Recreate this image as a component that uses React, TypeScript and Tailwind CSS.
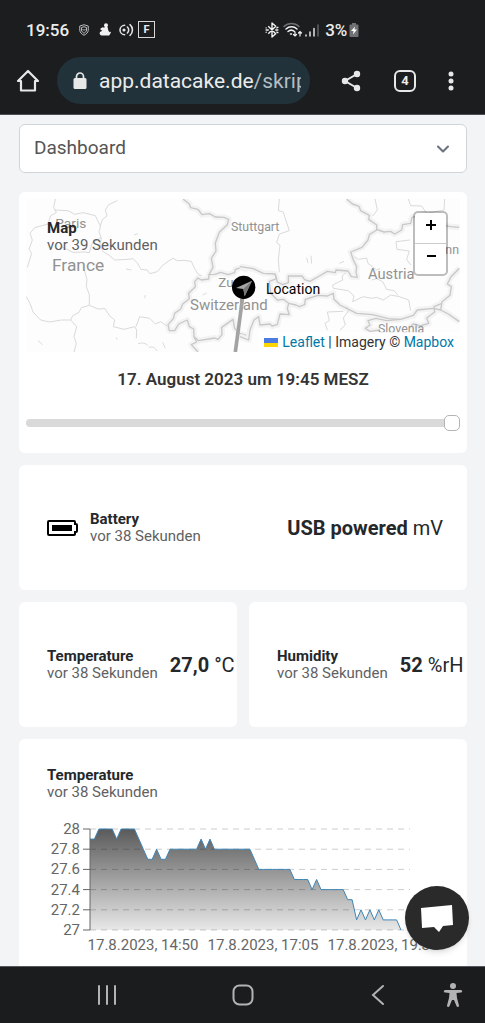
import { useState } from "react";
import type { ReactNode } from "react";
import clsx from "clsx";
import { ChevronDown } from "lucide-react";

const StatusBar = () => (
  <div className="flex h-[57px] items-center pl-[26px] pt-0.5 text-[17px] font-medium leading-6">
    <span>19:56</span>
    <svg className="ml-2.5 h-3 w-2.5" viewBox="0 0 20 24" fill="none" stroke="#b9bbbd" strokeWidth="2">
      <path d="M10 1.500 18.500 4v8c0 5-4 8.500-8.500 10.500C5.500 20.500 1.500 17 1.500 12V4z" />
      <path d="M10 5.500 15 7v5c0 3-2.500 5-5 6.500C7.500 17 5 15 5 12V7z" />
      <path d="m7 10 3 3 3-3" />
    </svg>
    <svg className="ml-2.5 h-3.5 w-3" viewBox="0 0 24 28" fill="#f1f1f1">
      <circle cx="14" cy="4.500" r="4" />
      <path d="M11 8h6l2 8c3 2 3 6 1 9H6c-4 0-6-4-4-7 2-2 6-2 7-4z" />
      <path d="m2 12 6-4 4 4-4 5z" />
      <path d="m18 22 4-5 2 2-4 6z" />
    </svg>
    <svg className="ml-[7px] h-4 w-4" viewBox="0 0 24 24" fill="none" stroke="#e4e4e4" strokeWidth="2.300" strokeLinecap="round">
      <path d="M10 5a7 7 0 1 0 0 14" />
      <path d="M14 7.500a6 6 0 0 1 0 9" />
      <path d="M18 4a10.500 10.500 0 0 1 0 16" />
      <circle cx="9" cy="12" r="1.200" fill="#e4e4e4" />
    </svg>
    <span className="ml-1 flex size-[17px] items-center justify-center border border-[#d8d8d8] text-[11px] font-bold leading-none">
      F
    </span>
    <svg className="ml-[110px] h-4 w-3.5" viewBox="0 0 26 30" fill="none" stroke="#f1f1f1" strokeWidth="2.600" strokeLinejoin="round">
      <path d="m6 8 14 14-7 6V2l7 6L6 22" />
      <path d="M2 11v.1M2 19v.1M6 15H2M24 15h-4M24 10l-2 1M24 20l-2-1" strokeLinecap="round" />
    </svg>
    <svg className="ml-1 h-4 w-5" viewBox="0 0 40 32" fill="none" stroke="#f1f1f1" strokeWidth="3" strokeLinecap="round">
      <path d="M2 9a22 22 0 0 1 30 0" stroke="#6d6f72" />
      <path d="M6 14a16 16 0 0 1 22 0" />
      <path d="M10 19a10 10 0 0 1 13 0" />
      <path d="M15 24h2" />
      <path d="M24 20v8m-3-3 3 3 3-3M34 28v-9m-3 3 3-3 3 3" strokeWidth="2.400" />
    </svg>
    <svg className="ml-0.5 h-4 w-3.5" viewBox="0 0 28 32" strokeWidth="3" strokeLinecap="round">
      <path d="M2 28v-2M10 28v-8M18 28V13" stroke="#e4e4e4" />
      <path d="M26 28V6" stroke="#606265" />
    </svg>
    <span className="ml-1.5">3%</span>
    <svg className="ml-0.5 h-4 w-2.5" viewBox="0 0 20 30">
      <path d="M6 1h8v3h3q2 0 2 2v21q0 2-2 2H3q-2 0-2-2V6q0-2 2-2h3z" fill="#6f7174" />
      <path d="m12 8-8 9h5l-1 7 8-10h-5z" fill="#fff" />
    </svg>
  </div>
);

const AddressBar = () => (
  <div className="flex h-[47px] items-center pl-4">
    <button type="button" aria-label="Home" className="size-6">
      <svg viewBox="0 0 24 24" fill="none" stroke="#e8e8e8" strokeWidth="2.200" strokeLinejoin="round">
        <path d="M2 12 12 2l10 10h-3v9.500H5V12z" />
      </svg>
    </button>
    <div className="ml-[17px] flex h-full min-w-0 flex-1 items-center rounded-full bg-[#22323a] pl-4 pr-[9px]">
      <svg className="h-[18px] w-3.5 shrink-0" viewBox="0 0 14 18">
        <path d="M3.500 7V4.500a3.500 3.500 0 0 1 7 0V7" fill="none" stroke="#e8e8e8" strokeWidth="1.700" />
        <rect x="0.500" y="6" width="13" height="11" rx="1.500" fill="#e8e8e8" />
      </svg>
      <div className="ml-3 overflow-hidden whitespace-nowrap text-[21px] leading-8">
        app.datacake.de<span className="text-[#b4bdc2]">/skrip</span>
      </div>
    </div>
    <button type="button" aria-label="Share" className="ml-[30px] size-[22px]">
      <svg viewBox="0 0 22 22" fill="#e8e8e8" stroke="#e8e8e8" strokeWidth="2">
        <path d="M17 4 5 11l12 7" fill="none" />
        <circle cx="17" cy="4" r="2.200" />
        <circle cx="5" cy="11" r="2.200" />
        <circle cx="17" cy="18" r="2.200" />
      </svg>
    </button>
    <button
      type="button"
      aria-label="Tabs"
      className="ml-8 flex size-[22px] items-center justify-center rounded-md border-2 border-[#e8e8e8] text-[13px] font-bold leading-none"
    >
      4
    </button>
    <button type="button" aria-label="Menu" className="ml-6 mr-[23px] size-[22px]">
      <svg viewBox="0 0 22 22" fill="#e8e8e8">
        <circle cx="11" cy="4" r="2.500" />
        <circle cx="11" cy="11" r="2.500" />
        <circle cx="11" cy="18" r="2.500" />
      </svg>
    </button>
  </div>
);

const Card = ({ className, children }: { className?: string; children: ReactNode }) => (
  <section className={clsx("rounded-md bg-white", className)}>{children}</section>
);

const WidgetTitle = ({ title, updated }: { title: string; updated: string }) => (
  <div className="whitespace-nowrap text-[15px] leading-[17px]">
    <h2 className="font-bold text-[#24282b]">{title}</h2>
    <p className="text-[#5f6163]">{updated}</p>
  </div>
);

const WidgetValue = ({ value, unit }: { value: string; unit: string }) => (
  <p className="whitespace-nowrap text-[20px] leading-6 text-[#24282b]">
    <strong className="font-bold">{value}</strong> {unit}
  </p>
);

// Country borders are heavier than the regional ones
const westRegions = [
  "M112 27 107 52 115 68 98 77 90 102 50 113 36 130 43 150 33 178 41 190 28 232",
  "M110 60 150 62 170 73 195 68 232 77 240 94 248 108 243 125 250 145 246 162 254 184 275 197 290 210 330 208 345 206 358 219 369 238 388 240 395 251 418 245 434 226 452 213 465 205 478 212 498 211 520 214 530 236 540 252 552 258",
  "M298 32 272 44 262 60 267 78 254 88 246 110",
  "M250 142 222 160 214 188 199 186 165 187 130 170",
  "M199 240 207 268 205 290 214 314 214 346 190 353 183 367 164 377 158 390 130 390 95 396 68 390 45 366 36 340 25 320",
  "M158 390 176 410 168 440 175 460 168 486",
  "M214 346 240 357 261 356 275 378 290 390 286 410 318 418 350 410 356 420 355 445M354 410 365 380 395 385 412 402 428 395 446 408",
];

const westBorders = [
  "M495 27 514 42 518 53 540 58 552 74 574 71 592 81 618 82 632 88 628 104 604 127 592 159 594 183 580 205 585 232 573 254 590 253 608 247 630 254 650 248 652 238 672 232 690 240",
  "M573 254 572 267 550 270 540 264 530 275 532 290 512 310 514 326 494 342 488 357 470 370 466 386 450 404 454 422 470 422 482 402 508 390 514 410 527 417 528 440 542 452 590 444 600 448 612 434 611 412 628 400 645 388 650 415 664 430 690 438",
  "M528 440 536 456 520 464 540 486",
];

const eastRegions = [
  "M118 27 115 62 130 66 134 80 148 122 118 132 110 158 120 165 115 210 118 247",
  "M405 27 412 60 398 78M505 27 512 47 545 48 560 70 612 60 614 27",
  "M343 200 355 208 380 204 384 220 410 240 420 236",
  "M510 150 468 155 471 178 508 183 500 208 512 225",
  "M318 248 306 258 308 270 278 285 280 295 325 302 342 318 338 335 370 320 395 325 410 322 430 330 452 315 478 320 506 330 512 362",
  "M320 350 326 362 310 384 316 405 300 420M310 364 262 366 268 392 255 400 262 420",
  "M395 270 410 266 428 275 440 298 462 302 474 316",
];

const eastBorders = [
  "M320 27 337 42 357 49 362 62 388 76 386 88 410 105 410 120 388 134 384 150 366 172 332 186 340 210 350 230 348 247 352 262 334 260 324 243 288 240 286 248 262 244 238 258 210 274 194 269 186 258 145 258 145 278 128 284 112 276 105 252 70 250 40 236 0 230",
  "M410 118 432 126 452 124 464 132 485 120 488 104 512 100 516 82 560 70M612 106 632 110 658 112",
  "M105 252 110 266 88 274 92 310 112 330 130 328 146 340 168 345 178 350 194 344 196 328 234 316 262 318 280 310 282 328 300 345 350 370 398 374 445 386 482 388 520 376 532 360 580 355 602 360 606 335 630 316 634 290 622 282 632 262 658 235",
  "M146 340 142 356 148 374 120 372 112 404 96 408 90 402 60 405 56 380 42 390 30 420 26 450 0 440",
  "M482 388 440 392 408 385 384 392 390 405 376 415 390 424 420 420M602 360 625 372 658 395M606 340 582 350 584 366 560 384 566 400 540 408 520 402 510 412",
];

const MapBackground = () => (
  <svg className="absolute inset-0 h-full w-full" viewBox="0 0 1302 459" preserveAspectRatio="xMidYMid slice">
    <rect width="1302" height="459" fill="#fdfdfd" />
    {[
      { shift: "translate(-24 -27)", regions: westRegions, borders: westBorders },
      { shift: "translate(642 -27)", regions: eastRegions, borders: eastBorders },
    ].map((half) => (
      <g key={half.shift} transform={half.shift} fill="none" strokeLinejoin="round">
        {half.borders.map((d) => (
          <path key={d} d={d} stroke="#f3f3f3" strokeWidth="18" />
        ))}
        {half.regions.map((d) => (
          <path key={d} d={d} stroke="#dadada" strokeWidth="3" />
        ))}
        {half.borders.map((d) => (
          <path key={d} d={d} stroke="#c8c8c8" strokeWidth="4" />
        ))}
      </g>
    ))}
    <path
      d="m324 108 12-4M300 210l16 3M356 298l2-10M36 425l14 12M270 416l4 6M336 434q20-6 30 6M368 446q14-8 26 10M410 430l8 18M842 176l4 16M855 170l2 24M940 193l14-6M530 288l12-6"
      fill="none"
      stroke="#dcdcdc"
      strokeWidth="3"
    />
    <g fill="#929292" fontSize="37">
      <text x="88" y="87" fontSize="41">Paris</text>
      <text x="78" y="215" fontSize="52">France</text>
      <text x="615" y="95">Stuttgart</text>
      <text x="577" y="265" fontSize="40">Zu</text>
      <text x="492" y="334" fontSize="45">Switzerland</text>
      <text x="1026" y="239" fontSize="44">Austria</text>
      <text x="1056" y="402">Slovenia</text>
      <text x="1258" y="165">nn</text>
    </g>
    <path d="M652 280 628 459" stroke="#a3a3a3" strokeWidth="11" />
    <circle cx="653" cy="265" r="35" fill="#000" />
    <path d="m678 245-48 22 22 3 4 22z" fill="#a5a5a5" />
    <path d="m678 245-26 25 4 22z" fill="#777" />
  </svg>
);

const MapWidget = () => {
  const [position, setPosition] = useState(100);

  return (
    <Card className="p-[7px] pb-[22px]">
      <div className="relative h-[153px] overflow-hidden">
        <MapBackground />
        <div className="absolute left-[21px] top-[21px]">
          <WidgetTitle title="Map" updated="vor 39 Sekunden" />
        </div>
        <span className="absolute left-1/2 top-20 ml-[23px] text-[14px] leading-5 text-black">Location</span>
        <div className="absolute right-3 top-3 flex w-[35px] flex-col rounded-[5px] border-2 border-black/25 bg-white bg-clip-padding">
          <button type="button" aria-label="Zoom in" className="flex h-[31px] items-center justify-center border-b border-[#ccc] pb-1.5">
            <svg className="size-3" viewBox="0 0 12 12" stroke="#000" strokeWidth="2">
              <path d="M6 1v10M1 6h10" />
            </svg>
          </button>
          <button type="button" aria-label="Zoom out" className="flex h-[30px] items-center justify-center pb-1.5">
            <svg className="size-3" viewBox="0 0 12 12" stroke="#000" strokeWidth="2">
              <path d="M2 6h9" />
            </svg>
          </button>
        </div>
        <div className="absolute bottom-0 right-0 flex items-center whitespace-pre bg-white/80 px-1.5 text-[14px] leading-5 text-[#333]">
          <svg className="mr-1 h-[9px] w-3.5" viewBox="0 0 14 9">
            <path d="M0 0h14v5H0z" fill="#4c7be1" />
            <path d="M0 5h14v4H0z" fill="#ffd500" />
          </svg>
          <a href="#leaflet" className="text-[#0078a8]">Leaflet</a>
          <span> | Imagery © </span>
          <a href="#mapbox" className="text-[#0078a8]">Mapbox</a>
        </div>
      </div>
      <p className="mt-[15px] text-center text-[17px] font-semibold leading-6 text-[#343434]">17. August 2023 um 19:45 MESZ</p>
      <input
        type="range"
        aria-label="Zeitpunkt"
        value={position}
        onChange={(e) => setPosition(Number(e.target.value))}
        className="mt-6 block h-4 w-full appearance-none bg-transparent [&::-webkit-slider-runnable-track]:h-2 [&::-webkit-slider-runnable-track]:rounded-full [&::-webkit-slider-runnable-track]:bg-[#d9d9d9] [&::-webkit-slider-thumb]:-mt-1 [&::-webkit-slider-thumb]:size-4 [&::-webkit-slider-thumb]:appearance-none [&::-webkit-slider-thumb]:rounded-[5px] [&::-webkit-slider-thumb]:border [&::-webkit-slider-thumb]:border-[#b5b5b5] [&::-webkit-slider-thumb]:bg-white"
      />
    </Card>
  );
};

const BatteryIcon = () => (
  <svg className="h-4 w-[31px] shrink-0" viewBox="0 0 31 16">
    <path
      d="M2 1h25q1 0 1 1v2h1q1 0 1 1v6q0 1-1 1h-1v2q0 1-1 1H2q-1 0-1-1V2q0-1 1-1z"
      fill="none"
      stroke="#000"
      strokeWidth="2"
    />
    <rect x="5" y="5" width="20" height="6" fill="#000" />
  </svg>
);

// [value, number of consecutive samples]
const runs: [number, number][] = [
  [27.9, 2], [28, 4], [27.9, 1], [28, 4], [27.9, 1], [27.8, 1], [27.7, 2], [27.8, 1], [27.7, 2],
  [27.8, 7], [27.9, 1], [27.8, 1], [27.9, 1], [27.8, 9], [27.7, 1], [27.6, 8], [27.5, 4],
  [27.4, 1], [27.5, 1], [27.4, 6], [27.3, 2], [27.1, 1], [27.2, 1], [27.1, 1], [27.2, 1],
  [27.1, 1], [27.2, 1], [27.1, 4], [27, 1],
];
const samples = runs.flatMap(([value, count]) => Array<number>(count).fill(value));

const yTicks = [28, 27.8, 27.6, 27.4, 27.2, 27];
const xTicks = ["17.8.2023, 14:50", "17.8.2023, 17:05", "17.8.2023, 19:35"];

const chartLeft = 64;
const chartRight = 375;
const yFor = (value: number) => 13 + (28 - value) * 101;

const TemperatureChart = () => {
  const step = (chartRight - chartLeft) / (samples.length - 1);
  const line = samples.map((v, i) => `${(chartLeft + i * step).toFixed(1)},${yFor(v).toFixed(1)}`).join(" ");

  return (
    <svg className="mt-[15px] block w-full" viewBox="0 0 434 142" fontSize="15" fill="#666">
      <defs>
        <linearGradient id="temperature-fill" x1="0" y1="0" x2="0" y2="1">
          <stop offset="0" stopColor="#5a5a5a" />
          <stop offset="1" stopColor="#e8e8e8" />
        </linearGradient>
      </defs>
      <polygon points={`${chartLeft},${yFor(27)} ${line}`} fill="url(#temperature-fill)" />
      {yTicks.map((tick) => (
        <g key={tick}>
          <path d={`M${chartLeft} ${yFor(tick)}H384`} stroke="#000" strokeOpacity="0.2" strokeDasharray="6 5" />
          <path d={`M57 ${yFor(tick)}h7`} stroke="#666" />
          <text x="54" y={yFor(tick) + 5} textAnchor="end">{tick}</text>
        </g>
      ))}
      <polyline points={line} fill="none" stroke="#3f85b5" strokeWidth="1" />
      <path d={`M${chartLeft} ${yFor(28)}V${yFor(27)}`} stroke="#666" />
      {xTicks.map((label, i) => (
        <text key={label} x={117 + i * 120} y="134" textAnchor="middle">{label}</text>
      ))}
    </svg>
  );
};

const NavigationBar = () => (
  <nav className="flex h-[57px] shrink-0 items-center border-t border-[#55585c] bg-[#1b1c1e] pl-24 pr-[21px]">
    <div className="mr-[53px] flex flex-1 justify-between">
      <button type="button" aria-label="Recents" className="size-[22px]">
        <svg viewBox="0 0 22 22" stroke="#b3b3b3" strokeWidth="2" strokeLinecap="round">
          <path d="M3 2v18M11 2v18M19 2v18" />
        </svg>
      </button>
      <button type="button" aria-label="Home screen" className="size-[22px]">
        <svg viewBox="0 0 22 22" fill="none" stroke="#b3b3b3" strokeWidth="2">
          <rect x="1.500" y="1.500" width="19" height="19" rx="6" />
        </svg>
      </button>
      <button type="button" aria-label="Back" className="size-[22px]">
        <svg viewBox="0 0 22 22" fill="none" stroke="#b3b3b3" strokeWidth="2" strokeLinecap="round">
          <path d="m16 2-10 9 10 9" />
        </svg>
      </button>
    </div>
    <button type="button" aria-label="Accessibility" className="h-6 w-[22px]">
      <svg viewBox="0 0 22 24" fill="#b3b3b3">
        <circle cx="11" cy="3" r="3" />
        <path d="M3 7h16q1.500.500 1.200 1.600-.200.800-1.200.900l-4.500.500.500 5 2 7.500q0 1.500-1.200 1.500-1 0-1.300-1L12 17h-2l-2.500 6q-.300 1-1.300 1Q5 24 5 22.500L7 15l.500-5L3 9.500q-1-.100-1.200-.900Q1.500 7.500 3 7z" />
      </svg>
    </button>
  </nav>
);

export default function App() {
  return (
    <div className="flex h-screen flex-col bg-[#f2f4f6] font-['Roboto',sans-serif]">
      <header className="h-[115px] shrink-0 border-b border-[#4b4e52] bg-[#1b1d1f] text-[#ececec]">
        <StatusBar />
        <AddressBar />
      </header>

      <div className="relative min-h-0 flex-1">
        <main className="flex h-full flex-col gap-3 overflow-hidden pl-[19px] pr-[18px] pt-[9px]">
          <div className="relative mb-[7px] shrink-0">
            <select
              aria-label="Dashboard"
              className="block h-[49px] w-full appearance-none rounded-md border border-[#d0d5da] bg-white pl-3.5 pr-10 text-[19px] text-[#555]"
            >
              <option>Dashboard</option>
            </select>
            <ChevronDown
              strokeWidth={2.5}
              className="pointer-events-none absolute right-3.5 top-1/2 size-5 -translate-y-1/2 text-[#6b7280]"
            />
          </div>

          <MapWidget />

          <Card className="flex h-[125px] shrink-0 items-center justify-between pl-7 pr-6">
            <div className="flex items-center gap-3">
              <BatteryIcon />
              <WidgetTitle title="Battery" updated="vor 38 Sekunden" />
            </div>
            <WidgetValue value="USB powered" unit="mV" />
          </Card>

          <div className="grid shrink-0 grid-cols-2 gap-3">
            <Card className="flex h-[125px] items-center gap-3 pl-7">
              <WidgetTitle title="Temperature" updated="vor 38 Sekunden" />
              <WidgetValue value="27,0" unit="°C" />
            </Card>
            <Card className="flex h-[125px] items-center gap-3 pl-7">
              <WidgetTitle title="Humidity" updated="vor 38 Sekunden" />
              <WidgetValue value="52" unit="%rH" />
            </Card>
          </div>

          <Card className="shrink-0 px-[7px] pb-7 pt-7">
            <div className="pl-[21px]">
              <WidgetTitle title="Temperature" updated="vor 38 Sekunden" />
            </div>
            <TemperatureChart />
          </Card>
        </main>

        <button
          type="button"
          aria-label="Chat"
          className="absolute bottom-4 right-4 flex size-16 items-center justify-center rounded-full bg-[#2a2a2a] shadow-md"
        >
          <svg className="h-7 w-8" viewBox="0 0 32 28" fill="#fff">
            <path d="M0 4 31 1l1 20-10 1-4 6-5-5-12 1z" />
          </svg>
        </button>
      </div>

      <NavigationBar />
    </div>
  );
}
